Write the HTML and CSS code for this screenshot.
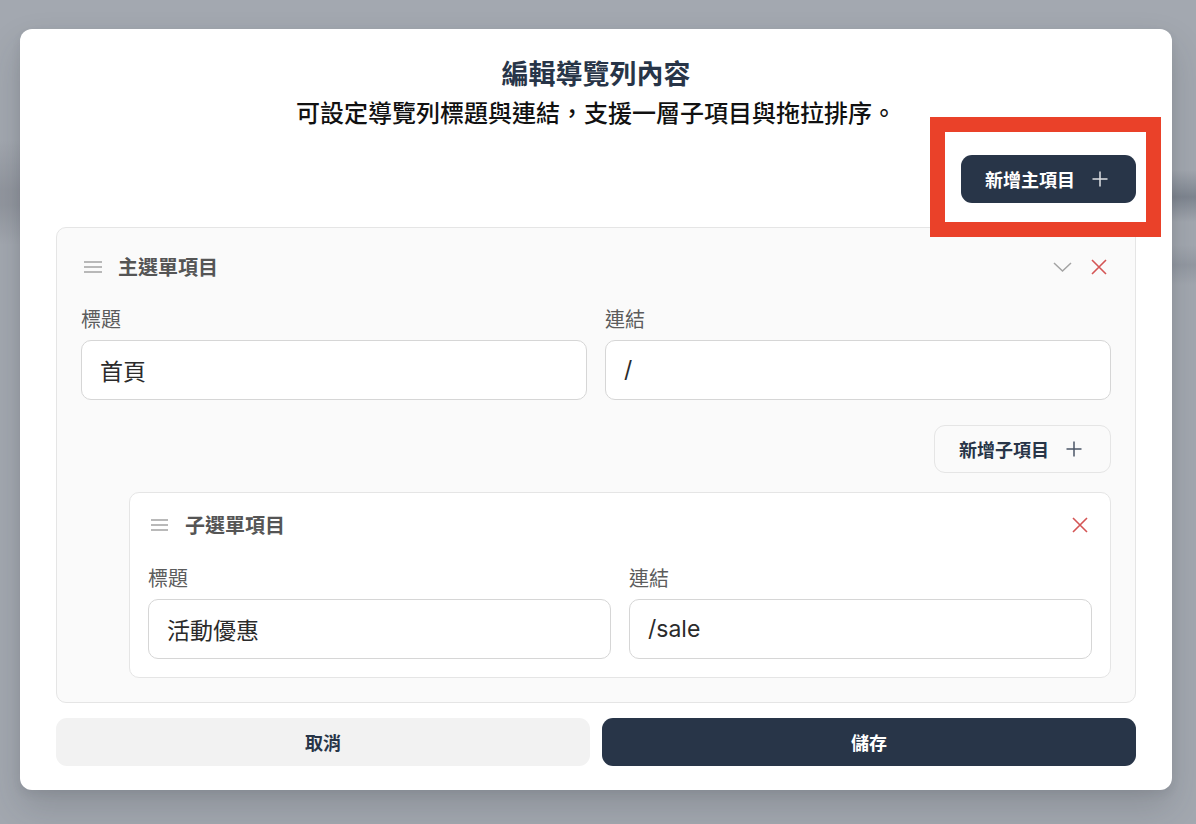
FILE: index.html
```
<!DOCTYPE html>
<html lang="zh-Hant">
<head>
<meta charset="utf-8">
<title>編輯導覽列內容</title>
<link rel="stylesheet" href="styles.css">
</head>
<body>
<div class="modal">
  <h1 class="title">編輯導覽列內容</h1>
  <p class="subtitle">可設定導覽列標題與連結，支援一層子項目與拖拉排序。</p>
  <div class="toolbar">
    <button class="btn btn-primary btn-add">新增主項目
      <svg class="plus" width="16" height="16" viewBox="0 0 16 16"><path d="M8 0.5V15.5M0.5 8H15.5" stroke="currentColor" stroke-width="1.5" fill="none"/></svg>
    </button>
  </div>
  <div class="highlight"></div>

  <div class="item-card">
    <div class="item-head">
      <svg class="drag" width="24" height="24" viewBox="0 0 24 24"><path d="M3 7H21M3 12H21M3 17H21" stroke="currentColor" stroke-width="1.4" fill="none"/></svg>
      <span class="item-name">主選單項目</span>
      <div class="head-actions">
        <svg class="chev" width="24" height="24" viewBox="0 0 24 24"><path d="M4 8L12.5 16L21 8" stroke="currentColor" stroke-width="1.5" fill="none"/></svg>
        <svg class="close" width="24" height="24" viewBox="0 0 24 24"><path d="M5 5L19 19M19 5L5 19" stroke="currentColor" stroke-width="1.6" fill="none"/></svg>
      </div>
    </div>
    <div class="fields">
      <label class="field"><span class="field-label">標題</span><input class="input" type="text" value="首頁"></label>
      <label class="field"><span class="field-label">連結</span><input class="input" type="text" value="/"></label>
    </div>
    <div class="sub-actions">
      <button class="btn btn-outline btn-add">新增子項目
        <svg class="plus" width="16" height="16" viewBox="0 0 16 16"><path d="M8 0.5V15.5M0.5 8H15.5" stroke="currentColor" stroke-width="1.5" fill="none"/></svg>
      </button>
    </div>
    <div class="sub-card">
      <div class="item-head">
        <svg class="drag" width="24" height="24" viewBox="0 0 24 24"><path d="M3 7H20M3 12H20M3 17H20" stroke="currentColor" stroke-width="1.4" fill="none"/></svg>
        <span class="item-name">子選單項目</span>
        <div class="head-actions">
          <svg class="close" width="24" height="24" viewBox="0 0 24 24"><path d="M5 5L19 19M19 5L5 19" stroke="currentColor" stroke-width="1.6" fill="none"/></svg>
        </div>
      </div>
      <div class="fields sub-fields">
        <label class="field"><span class="field-label">標題</span><input class="input" type="text" value="活動優惠"></label>
        <label class="field"><span class="field-label">連結</span><input class="input" type="text" value="/sale"></label>
      </div>
    </div>
  </div>

  <div class="footer">
    <button class="btn btn-cancel">取消</button>
    <button class="btn btn-primary">儲存</button>
  </div>
</div>
</body>
</html>
```
FILE: styles.css
```
* { box-sizing: border-box; }

html, body { height: 100%; }

body {
  margin: 0;
  font-family: "Inter", "Noto Sans CJK TC", sans-serif;
  background-color: #a3a8b0;
  background-image:
    linear-gradient(180deg, rgba(0,0,0,0) 140px, rgba(70,72,82,0.18) 190px, rgba(70,72,82,0.18) 205px, rgba(0,0,0,0) 245px),
    linear-gradient(180deg, rgba(0,0,0,0) 170px, rgba(60,70,85,0.35) 197px, rgba(0,0,0,0) 222px, rgba(0,0,0,0) 245px, rgba(60,70,85,0.15) 265px, rgba(0,0,0,0) 285px);
  background-repeat: no-repeat;
  background-size: 20px 100%, 24px 100%;
  background-position: left top, right top;
  overflow: hidden;
}

.modal {
  position: relative;
  width: 1152px;
  margin: 29px 0 0 20px;
  padding: 27px 36px 24px;
  background: #ffffff;
  border-radius: 12px;
  box-shadow: 0 18px 36px rgba(40, 44, 52, 0.18), 0 4px 10px rgba(40, 44, 52, 0.08);
}

.title {
  margin: 0;
  text-align: center;
  font-family: "Noto Sans CJK TC", sans-serif;
  font-size: 27px;
  line-height: 34px;
  font-weight: 700;
  color: #283548;
}

.subtitle {
  margin: 7px 0 0;
  text-align: center;
  font-family: "Noto Sans CJK TC", sans-serif;
  font-size: 24px;
  line-height: 30px;
  font-weight: 500;
  color: #111111;
}

.toolbar {
  display: flex;
  justify-content: flex-end;
  margin-top: 28px;
}

.btn {
  border: none;
  font-family: "Noto Sans CJK TC", sans-serif;
  font-size: 18px;
  font-weight: 700;
  line-height: 24px;
  height: 48px;
  border-radius: 11px;
  cursor: pointer;
}

.btn-primary {
  background: #283548;
  color: #ffffff;
}

.btn-add {
  display: flex;
  align-items: center;
  gap: 17px;
  padding: 0 28px 0 24px;
}

.btn-primary .plus { color: rgba(255,255,255,0.85); }

.btn-outline {
  background: #fafafa;
  color: #283548;
  border: 1px solid #e5e5e5;
}

.btn-outline .plus { color: #4b5567; }

.highlight {
  position: absolute;
  left: 910px;
  top: 88px;
  width: 231px;
  height: 120px;
  border: 15px solid #ea4129;
  pointer-events: none;
}

.item-card {
  margin-top: 24px;
  background: #fafafa;
  border: 1px solid #e5e5e5;
  border-radius: 10px;
  padding: 23px 24px 24px;
}

.item-head {
  display: flex;
  align-items: center;
  height: 32px;
  gap: 13px;
}

.drag { color: #a3a3a3; flex: none; }

.item-name {
  font-family: "Noto Sans CJK TC", sans-serif;
  font-size: 20px;
  line-height: 26px;
  font-weight: 700;
  color: #555555;
}

.head-actions {
  margin-left: auto;
  display: flex;
  align-items: center;
  gap: 13px;
}

.chev { color: #a3a3a3; }
.close { color: #d45555; }

.fields {
  display: grid;
  grid-template-columns: 1fr 1fr;
  column-gap: 18px;
  margin-top: 23px;
}

.field {
  display: flex;
  flex-direction: column;
  gap: 8px;
}

.field-label {
  font-family: "Noto Sans CJK TC", sans-serif;
  font-size: 20px;
  line-height: 26px;
  color: #5c5c5c;
}

.input {
  width: 100%;
  height: 60px;
  padding: 0 18px;
  border: 1px solid #d6d6d6;
  border-radius: 10px;
  background: #ffffff;
  font-family: "Inter", "Noto Sans CJK TC", sans-serif;
  font-size: 23px;
  color: #2b2b2b;
  outline: none;
}

.sub-actions {
  display: flex;
  justify-content: flex-end;
  margin-top: 25px;
}

.sub-card {
  margin: 19px 0 0 48px;
  background: #ffffff;
  border: 1px solid #e5e5e5;
  border-radius: 10px;
  padding: 16px 18px 18px;
}

.sub-fields { margin-top: 24px; }

.footer {
  display: grid;
  grid-template-columns: 1fr 1fr;
  column-gap: 12px;
  margin-top: 15px;
}

.btn-cancel {
  background: #f2f2f2;
  color: #283548;
}
```
